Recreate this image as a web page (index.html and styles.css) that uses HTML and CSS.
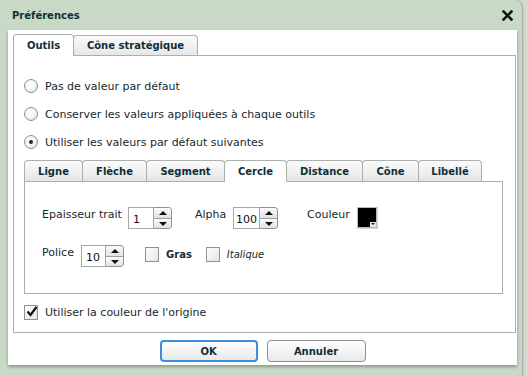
FILE: index.html
```html
<!DOCTYPE html>
<html lang="fr">
<head>
<meta charset="utf-8">
<title>Préférences</title>
<link rel="stylesheet" href="styles.css">
</head>
<body>
<div class="dialog">
  <div class="titlebar">
    <span class="title">Préférences</span>
    <svg class="close" width="11" height="11" viewBox="0 0 11 11"><path d="M1.5 1.5 L9.5 9.5 M9.5 1.5 L1.5 9.5" stroke="#111" stroke-width="2.6" stroke-linecap="square"/></svg>
  </div>
  <div class="content">
    <div class="tabs outer-tabs">
      <div class="tab active t-outils">Outils</div>
      <div class="tab t-cone">Cône stratégique</div>
    </div>
    <div class="panel outer-panel">
      <label class="option"><span class="radio"></span>Pas de valeur par défaut</label>
      <label class="option"><span class="radio"></span>Conserver les valeurs appliquées à chaque outils</label>
      <label class="option"><span class="radio checked"></span>Utiliser les valeurs par défaut suivantes</label>

      <div class="tabs inner-tabs">
        <div class="tab w-ligne">Ligne</div>
        <div class="tab w-fleche">Flèche</div>
        <div class="tab w-segment">Segment</div>
        <div class="tab active w-cercle">Cercle</div>
        <div class="tab w-distance">Distance</div>
        <div class="tab w-cone">Cône</div>
        <div class="tab w-libelle">Libellé</div>
      </div>
      <div class="panel inner-panel">
        <div class="row row1">
          <span class="label l-epaisseur">Epaisseur trait</span>
          <div class="spinner s-epaisseur"><span class="field">1</span><span class="arrows"><span class="up"></span><span class="down"></span></span></div>
          <span class="label l-alpha">Alpha</span>
          <div class="spinner s-alpha"><span class="field">100</span><span class="arrows"><span class="up"></span><span class="down"></span></span></div>
          <span class="label l-couleur">Couleur</span>
          <div class="swatch"><span class="swatch-arrow"></span></div>
        </div>
        <div class="row row2">
          <span class="label l-police">Police</span>
          <div class="spinner s-police"><span class="field">10</span><span class="arrows"><span class="up"></span><span class="down"></span></span></div>
          <span class="check c-gras"></span><span class="label bold">Gras</span>
          <span class="check c-ital"></span><span class="label italic">Italique</span>
        </div>
      </div>
      <label class="option origin"><span class="check checked"><svg width="12" height="11" viewBox="0 0 12 11"><path d="M1.5 5.5 L4.5 9 L10.5 1" fill="none" stroke="#111" stroke-width="2.2"/></svg></span>Utiliser la couleur de l'origine</label>
    </div>
    <div class="buttons">
      <button class="btn ok">OK</button>
      <button class="btn">Annuler</button>
    </div>
  </div>
</div>
</body>
</html>
```
FILE: styles.css
```css
html, body {
  margin: 0;
  padding: 0;
}
body {
  width: 528px;
  height: 376px;
  overflow: hidden;
  background: #d3dad0;
  font-family: "DejaVu Sans", Verdana, sans-serif;
  font-size: 11px;
  color: #16292c;
}
.dialog {
  width: 522px;
  height: 376px;
  background: #c8dac5;
  border-top-right-radius: 8px;
  box-shadow: 1px 0 2px rgba(0,0,0,0.25);
  display: flex;
  flex-direction: column;
}
.titlebar {
  height: 30px;
  display: flex;
  align-items: center;
  justify-content: space-between;
  padding: 0 9px 0 12px;
  box-sizing: border-box;
}
.title {
  font-weight: bold;
  font-size: 10px;
  color: #0f2f38;
}
.close {
  display: block;
}
.content {
  margin-left: 8px;
  width: 509px;
  height: 335px;
  background: #fff;
  box-sizing: border-box;
  padding: 4px 0 0 5px;
  box-shadow: 0 2px 3px rgba(60,70,60,0.45);
}
.tabs {
  display: flex;
  align-items: flex-end;
}
.tab {
  box-sizing: border-box;
  height: 20px;
  border: 1px solid #a9b0ae;
  border-bottom: none;
  border-radius: 4px 4px 0 0;
  background: linear-gradient(#fbfbfb, #e6e6e6);
  font-weight: bold;
  font-size: 10px;
  color: #0f2f38;
  display: flex;
  align-items: center;
  justify-content: center;
  margin-right: -1px;
}
.tab.active {
  background: #fff;
  height: 22px;
  position: relative;
  z-index: 1;
  margin-bottom: -1px;
}
.t-outils { width: 61px; }
.t-cone { width: 125px; }
.panel {
  border: 1px solid #a9b0ae;
  box-sizing: border-box;
}
.outer-panel {
  width: 503px;
  height: 278px;
  padding: 23px 10px 0 10px;
  display: flex;
  flex-direction: column;
}
.option {
  display: flex;
  align-items: center;
  height: 14px;
  margin-bottom: 14px;
  white-space: nowrap;
}
.radio {
  width: 14px;
  height: 14px;
  box-sizing: border-box;
  border: 1px solid #8a8f8f;
  border-radius: 50%;
  background: radial-gradient(circle at 40% 35%, #ffffff 0%, #f4f4f4 50%, #d8d8d8 100%);
  margin-right: 7px;
  position: relative;
  flex: none;
}
.radio.checked::after {
  content: "";
  position: absolute;
  width: 4px;
  height: 4px;
  border-radius: 50%;
  background: #222;
  left: 4px;
  top: 4px;
}
.inner-tabs {
  margin-top: -3px;
}
.inner-tabs .tab {
  height: 21px;
}
.inner-tabs .tab.active {
  height: 22px;
}
.w-ligne { width: 59px; }
.w-fleche { width: 65px; }
.w-segment { width: 79px; }
.w-cercle { width: 63px; }
.w-distance { width: 77px; }
.w-cone { width: 57px; }
.w-libelle { width: 64px; }
.inner-panel {
  width: 479px;
  height: 113px;
  padding: 25px 0 0 17px;
}
.row {
  display: flex;
  align-items: flex-start;
  height: 23px;
}
.row2 {
  margin-top: 15px;
}
.label {
  line-height: 13px;
  padding-top: 1px;
  white-space: nowrap;
}
.label.bold { font-weight: bold; font-size: 10px; color: #0f2f38; padding-top: 3px; }
.label.italic { font-style: italic; font-size: 10px; padding-top: 3px; }
.spinner {
  display: flex;
  height: 22px;
}
.field {
  box-sizing: border-box;
  height: 22px;
  border: 1px solid #a4a8a8;
  background: #fff;
  padding: 5px 0 0 4px;
  line-height: 13px;
  font-size: 11px;
  color: #111;
  overflow: hidden;
}
.arrows {
  width: 18px;
  height: 22px;
  box-sizing: border-box;
  border: 1px solid #8e9292;
  border-left: none;
  border-radius: 0 4px 4px 0;
  display: flex;
  flex-direction: column;
  overflow: hidden;
}
.up, .down {
  flex: 1;
  background: linear-gradient(#fcfcfc, #e2e2e2);
  position: relative;
}
.up { border-bottom: 1px solid #9a9e9e; }
.up::after, .down::after {
  content: "";
  position: absolute;
  left: 5px;
  width: 0;
  height: 0;
  border-left: 4px solid transparent;
  border-right: 4px solid transparent;
}
.up::after { top: 3px; border-bottom: 4px solid #111; }
.down::after { top: 3px; border-top: 4px solid #111; }
.l-epaisseur { width: 86px; }
.s-epaisseur .field { width: 26px; }
.l-alpha { margin-left: 23px; width: 38px; }
.s-alpha .field { width: 27px; padding-left: 2px; }
.l-couleur { margin-left: 29px; width: 50px; }
.swatch {
  width: 21px;
  height: 22px;
  box-sizing: border-box;
  border: 1px solid #b8bcbc;
  border-right-color: #d0d4d4;
  border-bottom-color: #d0d4d4;
  background: #000;
  box-shadow: inset -1px -1px 0 #bbb;
  position: relative;
}
.swatch-arrow {
  position: absolute;
  right: 1px;
  bottom: 1px;
  width: 6px;
  height: 5px;
  background: #e6e6e6;
}
.swatch-arrow::after {
  content: "";
  position: absolute;
  left: 1px;
  top: 1px;
  border-left: 2px solid transparent;
  border-right: 2px solid transparent;
  border-top: 2px solid #222;
}
.l-police { width: 39px; }
.s-police .field { width: 25px; }
.check {
  width: 14px;
  height: 15px;
  box-sizing: border-box;
  border: 1px solid #8e9292;
  background: linear-gradient(135deg, #ffffff, #e4e4e4);
  flex: none;
  position: relative;
}
.c-gras { margin-left: 21px; margin-top: 2px; margin-right: 7px; }
.c-ital { margin-left: 14px; margin-top: 2px; margin-right: 7px; }
.origin {
  margin-top: 11px;
  margin-bottom: 0;
}
.origin .check {
  margin-right: 7px;
}
.origin .check svg {
  position: absolute;
  left: 1px;
  top: 0;
}
.buttons {
  display: flex;
  justify-content: center;
  gap: 9px;
  margin-top: 7px;
  padding-right: 5px;
}
.btn {
  width: 99px;
  height: 22px;
  box-sizing: border-box;
  border: 1px solid #8a8e8e;
  border-radius: 4px;
  background: linear-gradient(#ffffff, #e9e9e9);
  font-family: "DejaVu Sans", Verdana, sans-serif;
  font-weight: bold;
  font-size: 10px;
  color: #0f2f38;
  padding: 0;
}
.btn.ok {
  border: 2px solid #3b8fde;
  width: 98px;
}
```
